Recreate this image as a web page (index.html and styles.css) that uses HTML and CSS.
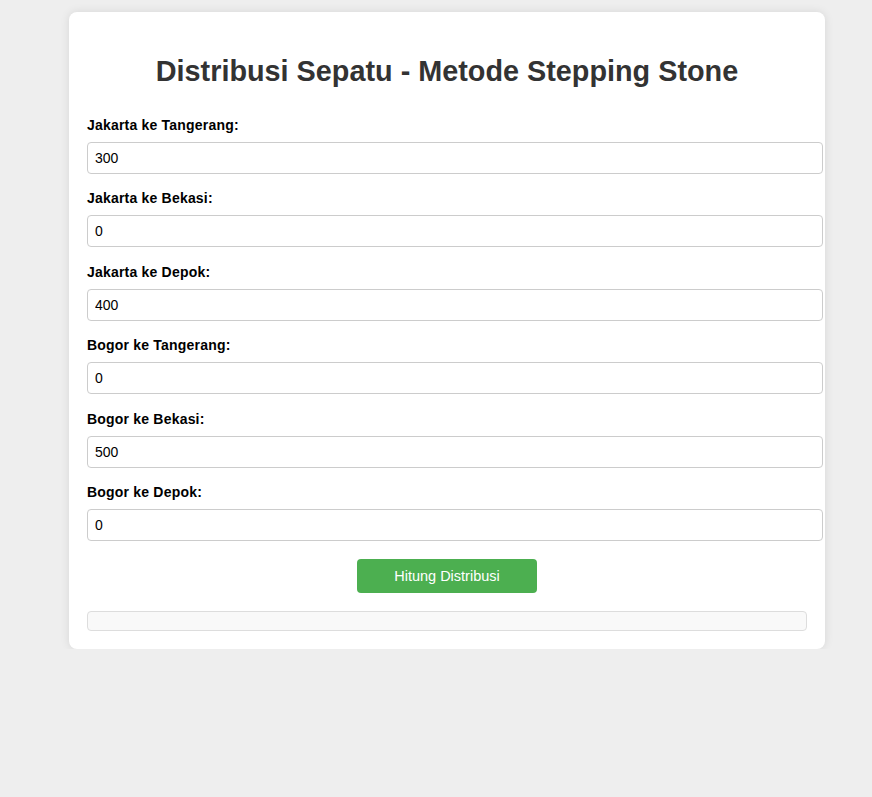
FILE: index.html
```html
<!DOCTYPE html>
<html>
<head>
<meta charset="utf-8">
<title>Distribusi Sepatu</title>
<link rel="stylesheet" href="styles.css">
</head>
<body>
<div class="container">
  <h1>Distribusi Sepatu - Metode Stepping Stone</h1>
  <form class="form">
    <div class="field">
      <label for="jt">Jakarta ke Tangerang:</label>
      <input id="jt" type="number" value="300">
    </div>
    <div class="field">
      <label for="jb">Jakarta ke Bekasi:</label>
      <input id="jb" type="number" value="0">
    </div>
    <div class="field">
      <label for="jd">Jakarta ke Depok:</label>
      <input id="jd" type="number" value="400">
    </div>
    <div class="field">
      <label for="bt">Bogor ke Tangerang:</label>
      <input id="bt" type="number" value="0">
    </div>
    <div class="field">
      <label for="bb">Bogor ke Bekasi:</label>
      <input id="bb" type="number" value="500">
    </div>
    <div class="field">
      <label for="bd">Bogor ke Depok:</label>
      <input id="bd" type="number" value="0">
    </div>
    <div class="actions">
      <button type="button" class="btn">Hitung Distribusi</button>
    </div>
  </form>
  <div class="result"></div>
</div>
</body>
</html>
```
FILE: styles.css
```css
html, body {
  margin: 0;
  padding: 0;
}
body {
  background: #eeeeee;
  font-family: "Liberation Sans", Arial, sans-serif;
  color: #000;
}
.container {
  width: 720px;
  margin: 12px 0 0 69px;
  padding: 18px;
  background: #fff;
  border-radius: 8px;
  box-shadow: 0 0 10px rgba(0, 0, 0, 0.1);
}
h1 {
  margin: 25px 0 29px;
  text-align: center;
  font-size: 28.8px;
  font-weight: bold;
  color: #333;
}
.field {
  margin-bottom: 16.4px;
}
.field label {
  display: block;
  font-size: 14px;
  font-weight: bold;
  letter-spacing: 0.2px;
  margin-bottom: 9px;
}
.field input {
  display: block;
  box-sizing: border-box;
  width: 736px;
  height: 32px;
  padding: 0 7px;
  border: 1px solid #ccc;
  border-radius: 4px;
  font-family: "Liberation Sans", Arial, sans-serif;
  font-size: 14px;
  color: #000;
  background: #fff;
  -moz-appearance: textfield;
}
.field input::-webkit-outer-spin-button,
.field input::-webkit-inner-spin-button {
  -webkit-appearance: none;
  margin: 0;
}
.actions {
  display: flex;
  justify-content: center;
  padding-top: 2px;
}
.btn {
  width: 180px;
  height: 34px;
  background: #4caf50;
  color: #fff;
  border: none;
  border-radius: 4px;
  font-family: "Liberation Sans", Arial, sans-serif;
  font-size: 14.5px;
}
.result {
  box-sizing: border-box;
  height: 20px;
  margin-top: 18px;
  background: #f9f9f9;
  border: 1px solid #ddd;
  border-radius: 4px;
}
```
